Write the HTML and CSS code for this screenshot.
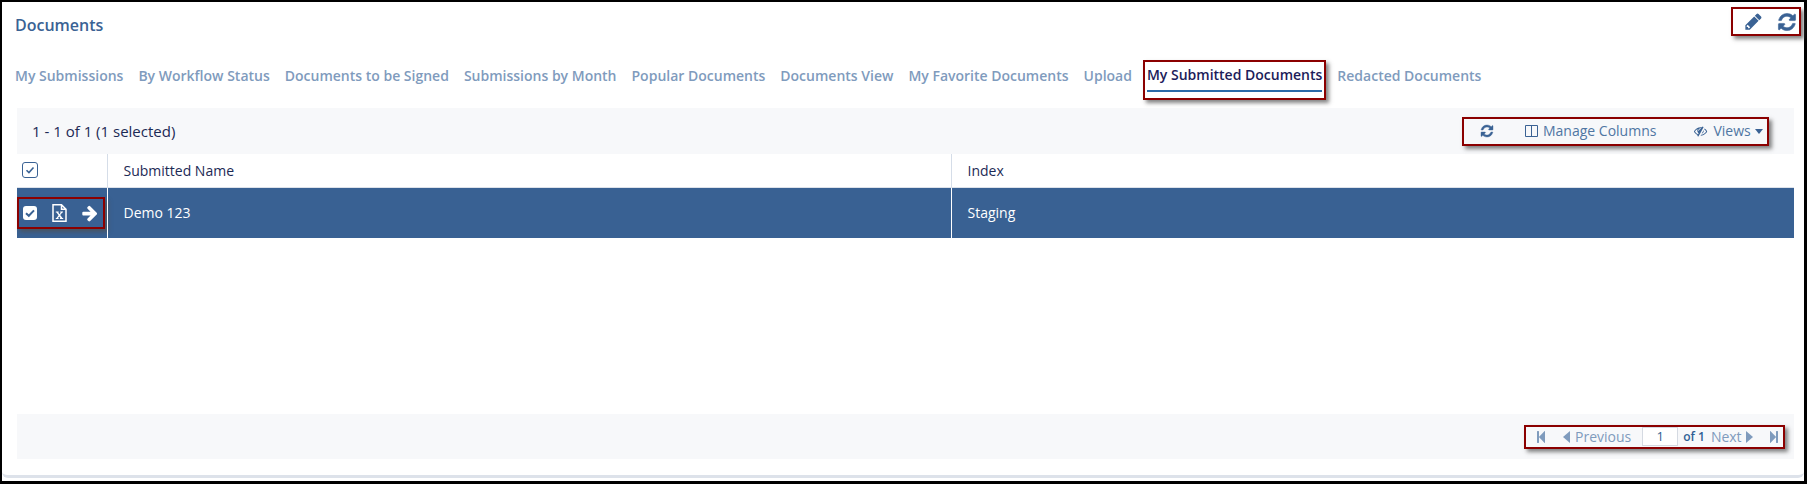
FILE: index.html
```html
<!DOCTYPE html>
<html>

<head>
  <meta charset="utf-8">
  <meta name="viewport" content="width=device-width">
  <title>Documents</title>
  <link rel="stylesheet" href="styles.css">
</head>

<body>
  <div class="page">
    <div class="card">

      <!-- Title and top right icons -->
      <header class="head">
        <h1 class="title">Documents</h1>
        <div class="mark head-tools">
          <svg class="icon icon-head" viewBox="0 0 1792 1792"><path d="M491 1536l91-91-235-235-91 91v107h128v128h107zM960 416l416 416-832 832h-416v-416zm683 96q0 53-37 90l-166 166-416-416 166-165q36-38 90-38 53 0 91 38l235 234q37 39 37 91z"/></svg>
          <svg class="icon icon-head icon-bold" viewBox="0 0 1792 1792"><path d="M1639 1056q0 5-1 7-64 268-268 434.5t-478 166.5q-146 0-282.5-55t-243.5-157l-129 129q-19 19-45 19t-45-19-19-45v-448q0-26 19-45t45-19h448q26 0 45 19t19 45-19 45l-137 137q71 66 161 102t187 36q134 0 250-65t186-179q11-17 53-117 8-23 30-23h192q13 0 22.5 9.5t9.5 22.5zm25-800v448q0 26-19 45t-45 19h-448q-26 0-45-19t-19-45 19-45l138-138q-148-137-349-137-134 0-250 65t-186 179q-11 17-53 117-8 23-30 23h-199q-13 0-22.5-9.5t-9.5-22.5v-7q65-268 270-434.5t480-166.5q146 0 284 55.5t245 156.5l130-129q19-19 45-19t45 19 19 45z"/></svg>
        </div>
      </header>

      <!-- Tabs -->
      <nav class="tabs">
        <a class="tab">My Submissions</a>
        <a class="tab">By Workflow Status</a>
        <a class="tab">Documents to be Signed</a>
        <a class="tab">Submissions by Month</a>
        <a class="tab">Popular Documents</a>
        <a class="tab">Documents View</a>
        <a class="tab">My Favorite Documents</a>
        <a class="tab">Upload</a>
        <a class="tab tab-active mark"><span>My Submitted Documents</span></a>
        <a class="tab">Redacted Documents</a>
      </nav>

      <section class="panel">
        <div class="toolbar">
          <span class="count">1 - 1 of 1 (1 selected)</span>
          <div class="mark actions">
            <svg class="icon icon-small icon-bold" viewBox="0 0 1792 1792"><path d="M1639 1056q0 5-1 7-64 268-268 434.5t-478 166.5q-146 0-282.5-55t-243.5-157l-129 129q-19 19-45 19t-45-19-19-45v-448q0-26 19-45t45-19h448q26 0 45 19t19 45-19 45l-137 137q71 66 161 102t187 36q134 0 250-65t186-179q11-17 53-117 8-23 30-23h192q13 0 22.5 9.5t9.5 22.5zm25-800v448q0 26-19 45t-45 19h-448q-26 0-45-19t-19-45 19-45l138-138q-148-137-349-137-134 0-250 65t-186 179q-11 17-53 117-8 23-30 23h-199q-13 0-22.5-9.5t-9.5-22.5v-7q65-268 270-434.5t480-166.5q146 0 284 55.5t245 156.5l130-129q19-19 45-19t45 19 19 45z"/></svg>
            <a class="action action-columns">
              <svg class="columns-icon" viewBox="0 0 13 12"><path d="M.5.5h12v11H.5zM6.500.5v11" fill="none" stroke="#3a6294"/></svg>
              Manage Columns
            </a>
            <a class="action action-views">
              <svg class="icon icon-eye" viewBox="0 0 2048 1792"><path d="M555 1335l78-141q-87-63-136-159t-49-203q0-121 61-225-229 117-381 353 167 258 427 375zm389-759q0-20-14-34t-34-14q-125 0-214.5 89.5t-89.5 214.5q0 20 14 34t34 14 34-14 14-34q0-86 61-147t147-61q20 0 34-14t14-34zm363-191q0 7-1 9-106 189-316 567t-315 566l-49 89q-10 16-28 16-12 0-134-70-16-10-16-28 0-12 44-87-143-65-263.5-173t-208.5-245q-20-31-20-69t20-69q153-235 380-371t496-136q89 0 180 17l54-97q10-16 28-16 5 0 18 6t31 15.5 33 18.5 31.5 18.5 19.5 11.5q16 10 16 27zm37 447q0 139-79 253.5t-209 164.5l280-502q8 45 8 84zm448 128q0 35-20 69-39 64-109 145-150 172-347.5 267t-419.5 95l74-132q212-18 392.5-137t301.5-307q-115-179-282-294l63-112q95 64 182.5 153t144.5 184q20 34 20 69z"/></svg>
              Views
              <i class="caret"></i>
            </a>
          </div>
        </div>

        <table class="grid">
          <thead>
            <tr>
              <th class="col-select"><span class="check"><svg viewBox="0 0 16 16"><path d="M4 8.3l2.8 2.7L12 5.2" fill="none" stroke="#3a6294" stroke-width="1.8"/></svg></span></th>
              <th class="col-name">Submitted Name</th>
              <th>Index</th>
            </tr>
          </thead>
          <tbody>
            <tr class="row-selected">
              <td class="col-select">
                <div class="mark row-tools">
                  <span class="check check-on"><svg viewBox="0 0 14 14"><path d="M3 7.2l2.8 2.6L11 4.4" fill="none" stroke="#3a6294" stroke-width="2"/></svg></span>
                  <svg class="file-icon" viewBox="0 0 15 18"><path d="M1 .8h8.500L14 5.300v11.900H1zM9.500 .8v4.500H14" fill="none" stroke="#fff" stroke-width="1.500"/><path d="M3.800 7.600h2.900v1h-.5l1.300 1.700 1.300-1.700h-.6v-1h2.800v1h-.7l-2.100 2.500 2.300 2.900h.7v1H7.900v-1h.5l-1.100-1.600-1.300 1.600h.6v1H3.800v-1h.7l2.100-2.700-2.100-2.700h-.7z" fill="#fff"/></svg>
                  <svg class="icon icon-arrow" viewBox="0 0 1792 1792"><path d="M1600 960q0 54-37 91l-651 651q-39 37-91 37-51 0-90-37l-75-75q-38-38-38-91t38-91l293-293h-704q-52 0-84.500-37.500t-32.500-90.500v-128q0-53 32.500-90.500t84.500-37.500h704l-293-294q-38-36-38-90t38-90l75-75q38-38 90-38 53 0 91 38l651 651q37 35 37 90z"/></svg>
                </div>
              </td>
              <td class="col-name">Demo 123</td>
              <td>Staging</td>
            </tr>
          </tbody>
        </table>

        <div class="filler"></div>

        <!-- Pager -->
        <div class="footer">
          <div class="mark pager">
            <svg class="icon icon-step" viewBox="0 0 1792 1792"><path d="M1363 141q19-19 32-13t13 32v1472q0 26-13 32t-32-13l-710-710q-9-9-13-19v678q0 26-19 45t-45 19h-128q-26 0-45-19t-19-45v-1408q0-26 19-45t45-19h128q26 0 45 19t19 45v678q4-10 13-19z"/></svg>
            <a class="page-link page-prev"><i class="tri tri-left"></i>Previous</a>
            <span class="page-input">1</span>
            <span class="page-of">of 1</span>
            <a class="page-link page-next">Next<i class="tri tri-right"></i></a>
            <svg class="icon icon-step icon-last" viewBox="0 0 1792 1792"><path d="M429 1651q-19 19-32 13t-13-32v-1472q0-26 13-32t32 13l710 710q9 9 13 19v-678q0-26 19-45t45-19h128q26 0 45 19t19 45v1408q0 26-19 45t-45 19h-128q-26 0-45-19t-19-45v-678q-4 10-13 19z"/></svg>
          </div>
        </div>
      </section>

    </div>
  </div>
</body>

</html>
```

FILE: styles.css
```css
html, body {
  margin: 0;
  height: 100%;
  background: white;
}

body {
  font-family: "Open Sans", "Noto Sans", sans-serif;
  font-size: 14px;
  line-height: 20px;
  color: #1c2a55;
}

.page {
  box-sizing: border-box;
  height: 484px;
  border-style: solid;
  border-color: black;
  border-width: 2px 3px 3px 2px;
  display: flex;
  flex-direction: column;
}

/* Card with the pale line along the bottom */
.card {
  flex: 1;
  display: flex;
  flex-direction: column;
  min-height: 0;
  padding: 5px 10px 16px 13px;
  margin-bottom: 3px;
  border-bottom: 3px solid #dde2ea;
  border-radius: 0 0 6px 6px;
}

/* Red boxes drawn on the screenshot */
.mark {
  box-sizing: border-box;
  border: 2px solid #8b0000;
  box-shadow: 3px 3px 4px rgba(80, 80, 80, 0.7);
}

.icon {
  fill: #3a6294;
  flex: none;
}

.icon-bold {
  stroke: #3a6294;
  stroke-width: 50;
}

/* Header */
.head {
  display: flex;
  justify-content: space-between;
  align-items: flex-start;
}

.title {
  margin: 8px 0 0;
  font-size: 16px;
  font-weight: 600;
  line-height: 20px;
  color: #3a6294;
}

.head-tools {
  display: flex;
  align-items: center;
  gap: 14px;
  width: 70px;
  height: 29px;
  margin-right: -7px;
  padding-left: 11px;
}

.icon-head {
  width: 19px;
  height: 19px;
}

.head-tools .icon-head:last-child {
  width: 20px;
  height: 20px;
}

/* Tabs */
.tabs {
  display: flex;
  align-items: flex-start;
  gap: 15px;
  margin-top: 30px;
  height: 20px;
}

.tab {
  font-weight: 600;
  color: #7f9bbd;
  white-space: nowrap;
}

.tab-active {
  color: #1c1c5a;
  margin: -6px -4px 0;
  padding: 3px 2px 5px;
  height: 40px;
}

.tab-active span {
  display: block;
  padding-bottom: 5px;
  border-bottom: 2px solid #2b6aa8;
}

/* Panel */
.panel {
  flex: 1;
  display: flex;
  flex-direction: column;
  margin: 22px 0 0 2px;
}

.toolbar {
  display: flex;
  align-items: center;
  justify-content: space-between;
  height: 46px;
  padding: 0 25px 0 15px;
  background: #f7f8fa;
}

.count {
  font-size: 15px;
}

.actions {
  display: flex;
  align-items: center;
  width: 307px;
  height: 29px;
  padding-left: 16px;
}

.icon-small {
  width: 14px;
  height: 14px;
}

.action {
  display: flex;
  align-items: center;
  color: #4f76a3;
  white-space: nowrap;
}

.action-columns {
  gap: 5px;
  margin-left: 31px;
}

.columns-icon {
  width: 13px;
  height: 12px;
}

.action-views {
  gap: 4px;
  margin-left: 38px;
}

.icon-eye {
  width: 15px;
  height: 14px;
}

.caret {
  width: 0;
  height: 0;
  border-style: solid;
  border-width: 5px 4.5px 0;
  border-color: #3a6294 transparent transparent;
}

/* Table */
.grid {
  width: 100%;
  table-layout: fixed;
  border-collapse: collapse;
}

.grid th {
  height: 33px;
  padding: 2px 15px 0 16px;
  box-sizing: border-box;
  font-weight: 400;
  text-align: left;
  border-bottom: 1px solid #dde2ea;
}

.grid td {
  height: 51px;
  padding: 0 15px 0 16px;
  box-sizing: border-box;
}

.grid .col-select {
  width: 90px;
  padding: 0;
  border-right: 1px solid #d5dde8;
}

.grid .col-name {
  width: 844px;
  border-right: 1px solid #d5dde8;
}

.row-selected {
  background: #396193;
  color: white;
}

.row-selected .col-select,
.row-selected .col-name {
  border-right-color: white;
}

.check {
  display: inline-block;
  box-sizing: border-box;
  width: 16px;
  height: 16px;
  margin: 0 0 2px 5px;
  vertical-align: middle;
  border: 1.5px solid #3a6294;
  border-radius: 3px;
}

.check svg {
  display: block;
  width: 100%;
  height: 100%;
}

.check-on {
  width: 14px;
  height: 14px;
  margin: 0;
  background: white;
  border: 0;
  flex: none;
}

.row-tools {
  display: flex;
  align-items: center;
  gap: 15px;
  width: 88px;
  height: 32px;
  padding-left: 4px;
}

.file-icon {
  width: 15px;
  height: 18px;
  flex: none;
}

.icon-arrow {
  width: 18px;
  height: 18px;
  margin-left: -1px;
  fill: white;
}

.filler {
  flex: 1;
}

/* Pager */
.footer {
  display: flex;
  justify-content: flex-end;
  align-items: center;
  height: 45px;
  padding-right: 9px;
  background: #f7f8fa;
}

.pager {
  display: flex;
  align-items: center;
  width: 261px;
  height: 24px;
  padding-left: 8px;
  color: #7f9bbd;
}

.icon-step {
  width: 14px;
  height: 14px;
  fill: #7f9bbd;
}

.page-link {
  display: flex;
  align-items: center;
  gap: 5px;
  white-space: nowrap;
}

.page-prev {
  margin-left: 15px;
}

.tri {
  width: 0;
  height: 0;
  border-style: solid;
}

.tri-left {
  border-width: 6px 7px 6px 0;
  border-color: transparent #7f9bbd transparent transparent;
}

.tri-right {
  border-width: 6px 0 6px 7px;
  border-color: transparent transparent transparent #7f9bbd;
}

.page-input {
  box-sizing: border-box;
  width: 36px;
  height: 19px;
  margin-left: 11px;
  border: 1px solid #d5dae2;
  background: white;
  color: #2f5f94;
  font-size: 13px;
  line-height: 17px;
  text-align: center;
}

.page-of {
  margin-left: 5px;
  font-size: 12px;
  font-weight: 600;
  color: #2f5f94;
  white-space: nowrap;
}

.page-next {
  margin-left: 6px;
  gap: 4px;
}

.icon-last {
  margin-left: 14px;
}
```
